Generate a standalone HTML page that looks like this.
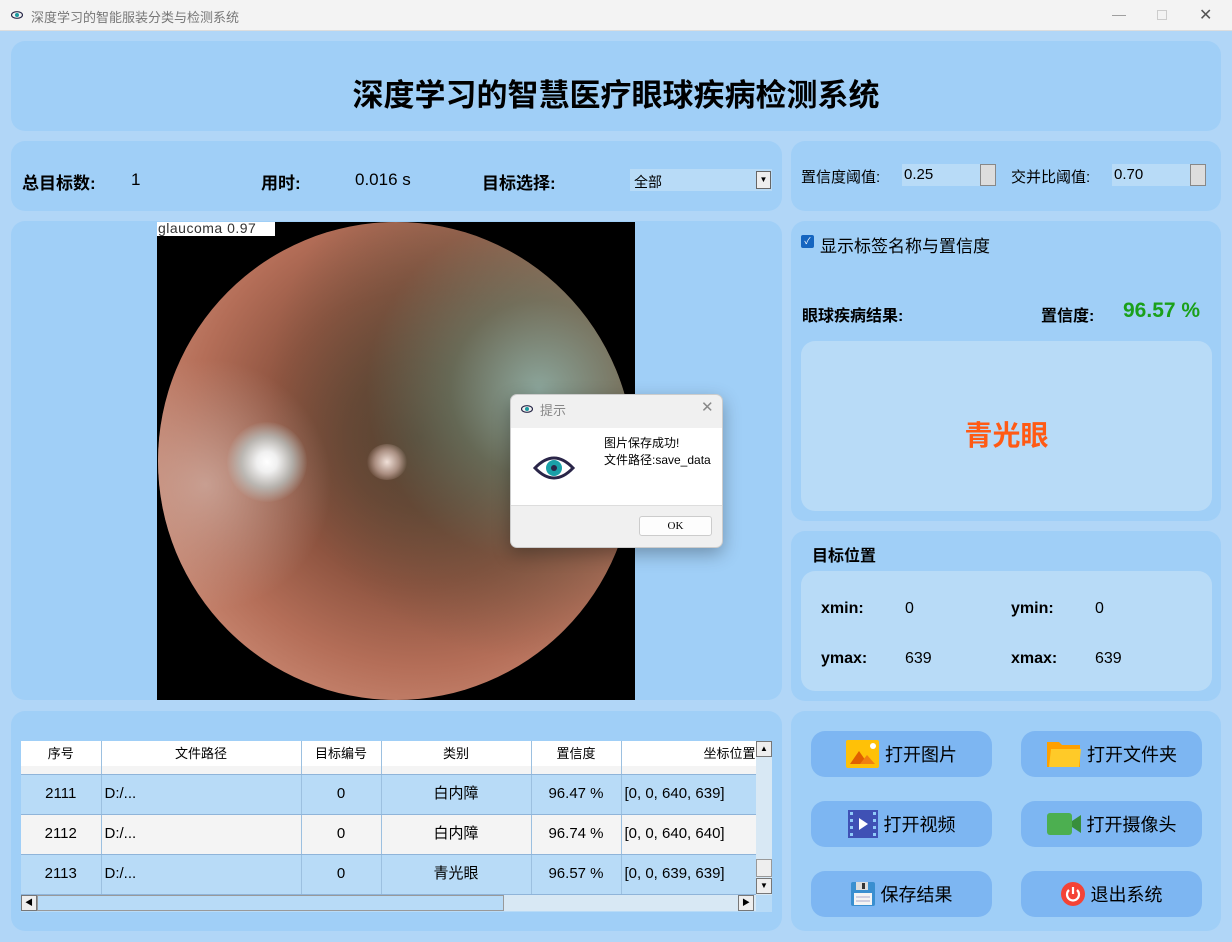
<!DOCTYPE html>
<html><head><meta charset="utf-8"><style>
*{margin:0;padding:0;box-sizing:border-box}
body{width:1232px;height:942px;background:#b1d6f7;font-family:"Liberation Sans","Noto Sans CJK SC",sans-serif;position:relative;overflow:hidden;color:#000}
.abs{position:absolute}
.panel{position:absolute;background:#a0cff7;border-radius:14px}
.inner{position:absolute;background:#b8dbf7;border-radius:14px}
.b{font-weight:bold}
.btn{position:absolute;width:181px;height:46px;background:#7db6f2;border-radius:14px;font-size:18px;display:flex;align-items:center;justify-content:center;gap:6px}
table{border-collapse:collapse;font-size:15px}
td{border-right:1px solid #9cc0e0;text-align:center;border-bottom:1px solid #8fb4d9;padding:0;line-height:16px}
tr.h td{height:25px;border-bottom:none;font-size:13px}
tr.s td{height:8px}
tr.r td{height:40px}
</style></head><body>
<div class="abs" style="left:0;top:0;width:1232px;height:31px;background:#f3f3f3;border-bottom:1px solid #ddd"></div>
<svg class="abs" style="left:11px;top:11px" width="12" height="8"><ellipse cx="6" cy="4" rx="5.5" ry="3.3" fill="none" stroke="#2a2a4a" stroke-width="1.2"/><circle cx="6" cy="4" r="2" fill="#1a9aa0"/></svg>
<div class="abs" style="left:31px;top:7px;font-size:13px;color:#777">深度学习的智能服装分类与检测系统</div>
<div class="abs" style="left:1112px;top:6px;font-size:14px;color:#999">—</div>
<div class="abs" style="left:1157px;top:10px;width:10px;height:10px;border:1px solid #ccc"></div>
<div class="abs" style="left:1199px;top:5px;font-size:16px;color:#555">✕</div>

<div class="panel" style="left:11px;top:41px;width:1210px;height:90px"></div>
<div class="abs b" style="left:0;width:1232px;top:70px;text-align:center;font-size:31px">深度学习的智慧医疗眼球疾病检测系统</div>

<div class="panel" style="left:11px;top:141px;width:771px;height:70px"></div>
<div class="abs b" style="left:22px;top:169px;font-size:17px">总目标数:</div>
<div class="abs" style="left:131px;top:170px;font-size:17px">1</div>
<div class="abs b" style="left:261px;top:169px;font-size:17px">用时:</div>
<div class="abs" style="left:355px;top:170px;font-size:17px">0.016 s</div>
<div class="abs b" style="left:482px;top:169px;font-size:17px">目标选择:</div>
<div class="abs" style="left:630px;top:169px;width:142px;height:22px;background:#b8dbf7;font-size:14px;padding:3px 4px">全部</div>
<div class="abs" style="left:756px;top:171px;width:15px;height:18px;background:#eee;border:1px solid #666;font-size:8px;text-align:center;line-height:16px">▼</div>

<div class="panel" style="left:791px;top:141px;width:430px;height:70px"></div>
<div class="abs" style="left:801px;top:166px;font-size:15px">置信度阈值:</div>
<div class="abs" style="left:902px;top:164px;width:78px;height:22px;background:#b8dbf7;font-size:15px;padding:2px 2px">0.25</div>
<div class="abs" style="left:980px;top:164px;width:16px;height:22px;background:#ddd;border:1px solid #888"></div>
<div class="abs" style="left:1011px;top:166px;font-size:15px">交并比阈值:</div>
<div class="abs" style="left:1112px;top:164px;width:78px;height:22px;background:#b8dbf7;font-size:15px;padding:2px 2px">0.70</div>
<div class="abs" style="left:1190px;top:164px;width:16px;height:22px;background:#ddd;border:1px solid #888"></div>

<div class="panel" style="left:11px;top:221px;width:771px;height:479px"></div>
<div class="abs" style="left:157px;top:222px;width:478px;height:478px;background:#000;overflow:hidden">
<div class="abs" style="left:1px;top:0;width:476px;height:478px;border-radius:50%;background:radial-gradient(circle at 55% 45%,#5a3c2c 0,#6e4634 20%,#8e5440 40%,#b46e58 62%,#d0907a 85%,#c8846c 100%)"></div>
<div class="abs" style="left:1px;top:0;width:476px;height:478px;border-radius:50%;background:radial-gradient(circle at 80% 35%,rgba(140,170,160,.95) 0,rgba(100,120,100,.7) 18%,rgba(80,80,60,.3) 35%,rgba(0,0,0,0) 55%)"></div>
<div class="abs" style="left:1px;top:0;width:476px;height:478px;border-radius:50%;background:radial-gradient(circle at 10% 55%,rgba(210,180,170,.7) 0,rgba(0,0,0,0) 25%)"></div>
<div class="abs" style="left:70px;top:200px;width:80px;height:80px;border-radius:50%;background:radial-gradient(circle,#fff 0,#f0f0f0 18%,rgba(190,205,205,.7) 45%,rgba(0,0,0,0) 72%)"></div>
<div class="abs" style="left:210px;top:222px;width:40px;height:36px;border-radius:50%;background:radial-gradient(circle,#f0e0d8 0,rgba(220,190,180,.6) 45%,rgba(0,0,0,0) 75%)"></div>
<div class="abs" style="left:0;top:0;width:118px;height:14px;background:#fff;font-size:14px;line-height:13px;color:#333;padding-left:1px;letter-spacing:0.5px">glaucoma 0.97</div>
</div>

<div class="panel" style="left:791px;top:221px;width:430px;height:300px"></div>
<div class="abs" style="left:801px;top:235px;width:13px;height:13px;background:#1565c0;border-radius:2px;color:#fff;font-size:9px;text-align:center;line-height:13px">✓</div>
<div class="abs" style="left:820px;top:232px;font-size:17px">显示标签名称与置信度</div>
<div class="abs b" style="left:802px;top:302px;font-size:16px">眼球疾病结果:</div>
<div class="abs b" style="left:1041px;top:302px;font-size:16px">置信度:</div>
<div class="abs b" style="left:1123px;top:299px;font-size:21px;color:#1aa01a">96.57 %</div>
<div class="inner" style="left:801px;top:341px;width:411px;height:170px"></div>
<div class="abs b" style="left:801px;width:411px;top:414px;text-align:center;font-size:28px;color:#ff5a14">青光眼</div>

<div class="panel" style="left:791px;top:531px;width:430px;height:170px"></div>
<div class="abs b" style="left:812px;top:542px;font-size:16px">目标位置</div>
<div class="inner" style="left:801px;top:571px;width:411px;height:120px"></div>
<div class="abs b" style="left:821px;top:600px;font-size:16px">xmin:</div>
<div class="abs" style="left:905px;top:600px;font-size:16px">0</div>
<div class="abs b" style="left:1011px;top:600px;font-size:16px">ymin:</div>
<div class="abs" style="left:1095px;top:600px;font-size:16px">0</div>
<div class="abs b" style="left:821px;top:650px;font-size:16px">ymax:</div>
<div class="abs" style="left:905px;top:650px;font-size:16px">639</div>
<div class="abs b" style="left:1011px;top:650px;font-size:16px">xmax:</div>
<div class="abs" style="left:1095px;top:650px;font-size:16px">639</div>

<div class="panel" style="left:11px;top:711px;width:771px;height:220px"></div>
<div class="abs" style="left:21px;top:741px;width:751px;height:171px;background:#b8dbf7;overflow:hidden">
<table style="width:735px;table-layout:fixed">
<colgroup><col style="width:80px"><col style="width:200px"><col style="width:80px"><col style="width:150px"><col style="width:90px"><col style="width:135px"></colgroup>
<tr class="h" style="background:#fff"><td>序号</td><td>文件路径</td><td>目标编号</td><td>类别</td><td>置信度</td><td style="text-align:right">坐标位置</td></tr>
<tr class="s" style="background:#f4f4f4"><td></td><td></td><td></td><td></td><td></td><td></td></tr>
<tr class="r" style="background:#b8dbf7"><td>2111</td><td style="text-align:left;padding-left:3px">D:/...</td><td>0</td><td>白内障</td><td>96.47 %</td><td style="text-align:left;padding-left:3px">[0, 0, 640, 639]</td></tr>
<tr class="r" style="background:#f4f4f4"><td>2112</td><td style="text-align:left;padding-left:3px">D:/...</td><td>0</td><td>白内障</td><td>96.74 %</td><td style="text-align:left;padding-left:3px">[0, 0, 640, 640]</td></tr>
<tr class="r" style="background:#b8dbf7"><td>2113</td><td style="text-align:left;padding-left:3px">D:/...</td><td>0</td><td>青光眼</td><td>96.57 %</td><td style="text-align:left;padding-left:3px">[0, 0, 639, 639]</td></tr>
</table>
<div class="abs" style="left:735px;top:0;width:16px;height:154px;background:#d8e8f4"></div>
<div class="abs" style="left:735px;top:0;width:16px;height:16px;background:#eee;border:1px solid #777;font-size:8px;text-align:center;line-height:14px">▲</div>
<div class="abs" style="left:735px;top:118px;width:16px;height:18px;background:#eee;border:1px solid #999"></div>
<div class="abs" style="left:735px;top:137px;width:16px;height:16px;background:#eee;border:1px solid #777;font-size:8px;text-align:center;line-height:14px">▼</div>
<div class="abs" style="left:0;top:154px;width:735px;height:16px;background:#d8e8f4"></div>
<div class="abs" style="left:0;top:154px;width:16px;height:16px;background:#eee;border:1px solid #777;font-size:8px;text-align:center;line-height:14px">◀</div>
<div class="abs" style="left:16px;top:154px;width:467px;height:16px;background:#b8dbf7;border:1px solid #999"></div>
<div class="abs" style="left:717px;top:154px;width:16px;height:16px;background:#eee;border:1px solid #777;font-size:8px;text-align:center;line-height:14px">▶</div>
</div>

<div class="panel" style="left:791px;top:711px;width:430px;height:220px"></div>
<div class="btn" style="left:811px;top:731px"><svg width="33" height="28"><rect width="33" height="28" rx="2" fill="#ffc107"/><polygon points="4,24 13,11 22,24" fill="#e06000"/><polygon points="14,24 21,15 29,24" fill="#f08010"/><circle cx="27" cy="6" r="3" fill="#fff"/></svg>打开图片</div>
<div class="btn" style="left:1021px;top:731px"><svg width="35" height="28"><path d="M1 2h12l3 3h18v22H1z" fill="#ffa000"/><path d="M5 9h30l-2 18H3z" fill="#ffca28"/></svg>打开文件夹</div>
<div class="btn" style="left:811px;top:801px"><svg width="30" height="28"><rect width="30" height="28" fill="#3f51b5"/><g fill="#90caf9"><rect x="2" y="2" width="3" height="3"/><rect x="2" y="9" width="3" height="3"/><rect x="2" y="16" width="3" height="3"/><rect x="2" y="23" width="3" height="3"/><rect x="25" y="2" width="3" height="3"/><rect x="25" y="9" width="3" height="3"/><rect x="25" y="16" width="3" height="3"/><rect x="25" y="23" width="3" height="3"/></g><polygon points="11,8 20,14 11,20" fill="#fff"/></svg>打开视频</div>
<div class="btn" style="left:1021px;top:801px"><svg width="34" height="22"><rect width="25" height="22" rx="3" fill="#4caf50"/><polygon points="25,8 34,2 34,20 25,14" fill="#388e3c"/></svg>打开摄像头</div>
<div class="btn" style="left:811px;top:871px"><svg width="24" height="24"><rect width="24" height="24" rx="2" fill="#3a8fd0"/><rect x="5" y="0" width="12" height="8" fill="#ddd"/><rect x="11" y="1" width="3" height="6" fill="#333"/><rect x="3" y="11" width="18" height="12" fill="#f4f4f4"/><line x1="5" y1="15" x2="19" y2="15" stroke="#aac" /><line x1="5" y1="19" x2="19" y2="19" stroke="#aac"/></svg>保存结果</div>
<div class="btn" style="left:1021px;top:871px"><svg width="24" height="24"><circle cx="12" cy="12" r="12" fill="#f44336"/><path d="M8 8a6 6 0 1 0 8 0" fill="none" stroke="#fff" stroke-width="2.2"/><line x1="12" y1="5" x2="12" y2="12" stroke="#fff" stroke-width="2.2"/></svg>退出系统</div>

<div class="abs" style="left:510px;top:394px;width:213px;height:154px;background:#f0f0f0;border:1px solid #ccc;border-radius:7px;box-shadow:0 6px 18px rgba(0,0,0,.3);overflow:hidden">
<svg class="abs" style="left:10px;top:10px" width="12" height="8"><ellipse cx="6" cy="4" rx="5.5" ry="3.3" fill="none" stroke="#2a2a4a" stroke-width="1.2"/><circle cx="6" cy="4" r="2" fill="#1a9aa0"/></svg>
<div class="abs" style="left:29px;top:5px;font-size:13px;color:#888">提示</div>
<div class="abs" style="left:190px;top:3px;font-size:15px;color:#888">✕</div>
<div class="abs" style="left:0;top:33px;width:213px;height:78px;background:#fff;border-bottom:1px solid #ddd"></div>
<svg class="abs" style="left:22px;top:59px" width="42" height="28"><path d="M2 14Q21 -6 40 14Q21 34 2 14Z" fill="none" stroke="#2a2548" stroke-width="3"/><circle cx="21" cy="14" r="8" fill="#1aa0a8"/><circle cx="21" cy="14" r="3" fill="#2a2548"/></svg>
<div class="abs" style="left:93px;top:40px;font-size:12px;line-height:17px">图片保存成功!<br>文件路径:save_data</div>
<div class="abs" style="left:128px;top:121px;width:73px;height:20px;background:#fdfdfd;border:1px solid #ccc;border-radius:3px;font-family:'Liberation Serif',serif;font-size:11px;text-align:center;line-height:18px">OK</div>
</div>
</body></html>
